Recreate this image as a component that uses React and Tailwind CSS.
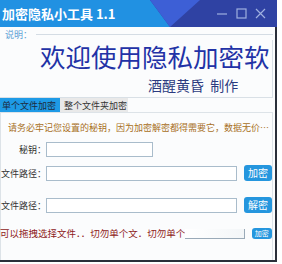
import React from 'react';

const font = { fontFamily: '"Noto Sans CJK SC", "Noto Sans", sans-serif' };

// 标题栏背景的斜切色块
const TitleBg = () => (
  <svg className="absolute inset-0" width="277" height="27" viewBox="0 0 277 27">
    <rect width="277" height="27" fill="#2191e2" />
    <polygon points="150,0 277,0 277,27 170,27" fill="#2f42a3" />
    <polygon points="150,0 200,0 170,27" fill="#3d5fd6" />
  </svg>
);

const WinControls = () => (
  <div className="relative flex items-center gap-[8px] pr-[9px] text-[#9fb0e0]">
    <svg width="11" height="11" viewBox="0 0 11 11"><path d="M0 6h10" stroke="currentColor" strokeWidth="1.2" /></svg>
    <svg width="11" height="11" viewBox="0 0 11 11"><rect x="1" y="1" width="9" height="9" fill="none" stroke="currentColor" strokeWidth="1.2" /></svg>
    <svg width="11" height="11" viewBox="0 0 11 11"><path d="M1 1l9 9M10 1l-9 9" stroke="currentColor" strokeWidth="1.2" /></svg>
  </div>
);

const Field = ({ label, width, className = '' }) => (
  <div className={`flex items-center ${className}`}>
    <span className="w-[45px] shrink-0 text-right text-[9px] leading-none whitespace-nowrap text-[#333]">{label}</span>
    <div className={`h-[15px] border border-[#a9bccb] bg-white ${width}`} />
  </div>
);

const BlueBtn = ({ children, className = '' }) => (
  <div className={`flex items-center justify-center rounded-[3px] bg-[#2596de] text-[10px] leading-none text-white ${className}`}>
    {children}
  </div>
);

export default function App() {
  return (
    <div className="w-[282px] h-[264px] bg-white" style={font}>
      <div className="w-[277px] h-[262px] border-r-2 border-b-2 border-[#2a2f3a] bg-[#fbfcfd] flex flex-col">
        {/* 标题栏 */}
        <div className="relative h-[27px] flex items-center justify-between">
          <TitleBg />
          <span className="relative pl-[2px] text-[13px] font-bold leading-none text-white">加密隐私小工具 1.1</span>
          <WinControls />
        </div>

        {/* 说明 */}
        <div className="mt-[1px] pr-[2px]">
          <div className="flex items-center h-[12px]">
            <span className="pl-[5px] pr-[4px] text-[9px] leading-none text-[#5ea2d6]">说明：</span>
            <div className="flex-1 border-t border-[#d4dce4]" />
          </div>
          <div className="border-r border-b border-[#d9e0e6] h-[58px]">
            <div className="pl-[40px] pt-[1px] text-[25.5px] leading-[30px] whitespace-nowrap text-[#2232a6]">欢迎使用隐私加密软</div>
            <div className="pl-[148px] pt-[7px] text-[14px] leading-none text-[#2c3b80]">酒醒黄昏&nbsp;&nbsp;制作</div>
          </div>
        </div>

        {/* 选项卡 */}
        <div className="flex h-[14px] text-[9px] leading-none">
          <div className="w-[60px] bg-[#1e9ae6] flex items-center pl-[2px] text-[#1d2c40]">单个文件加密</div>
          <div className="w-[68px] bg-[#e9e9e9] flex items-center pl-[4px] text-[#333]">整个文件夹加密</div>
        </div>

        {/* 面板 */}
        <div className="flex-1 mr-[2px] border border-[#dde3e8] border-b-0">
          <div className="pl-[7px] pt-[10px] text-[9px] leading-none whitespace-nowrap text-[#a8701e]">
            请务必牢记您设置的秘钥，因为加密解密都得需要它，数据无价…
          </div>
          <Field label="秘钥：" width="w-[107px]" className="mt-[10px]" />
          <div className="mt-[8px] flex items-center">
            <Field label="文件路径：" width="w-[191px]" />
            <BlueBtn className="ml-[7px] w-[30px] h-[16px]">加密</BlueBtn>
          </div>
          <div className="mt-[16px] flex items-center">
            <Field label="文件路径：" width="w-[191px]" />
            <BlueBtn className="ml-[7px] w-[29px] h-[16px]">解密</BlueBtn>
          </div>
          <div className="mt-[15px] flex items-center">
            <span className="-ml-[1px] text-[9.5px] leading-none whitespace-nowrap text-[#8e1a1a]">可以拖拽选择文件．．切勿单个文．切勿单个</span>
            <div className="h-[10px] w-[72px] border-r border-b border-[#9aaab8] bg-gradient-to-r from-white to-[#f3f6f8]" />
            <BlueBtn className="ml-[7px] w-[25px] h-[11px] !text-[7px] bg-[#3aa0e0]">加密</BlueBtn>
          </div>
        </div>
      </div>
    </div>
  );
}
